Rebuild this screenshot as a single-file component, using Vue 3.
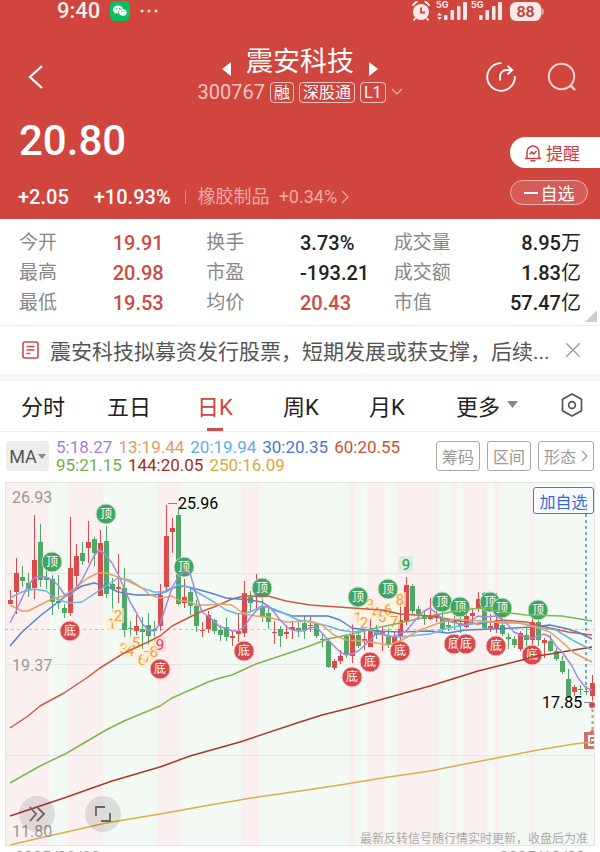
<script setup>
const stats = [
  { label: '今开', value: '19.91', up: true },
  { label: '换手', value: '3.73%' },
  { label: '成交量', value: '8.95', unit: '万' },
  { label: '最高', value: '20.98', up: true },
  { label: '市盈', value: '-193.21' },
  { label: '成交额', value: '1.83', unit: '亿' },
  { label: '最低', value: '19.53', up: true },
  { label: '均价', value: '20.43', up: true },
  { label: '市值', value: '57.47', unit: '亿' },
]

const tabs = ['分时', '五日', '日K', '周K', '月K']

const averages = [
  { name: '5', value: '18.27', key: 'ma5' },
  { name: '13', value: '19.44', key: 'ma13' },
  { name: '20', value: '19.94', key: 'ma20' },
  { name: '30', value: '20.35', key: 'ma30' },
  { name: '60', value: '20.55', key: 'ma60' },
  { name: '95', value: '21.15', key: 'ma95' },
  { name: '144', value: '20.05', key: 'ma144' },
  { name: '250', value: '16.09', key: 'ma250' },
]

// Rising phases: [start, end]
const bands = [
  [5, 49], [67, 103], [157, 181], [241, 259], [349, 355], [367, 385],
  [397, 439], [451, 457], [463, 487], [494, 499], [529, 535],
]

// [x, body top, body bottom, wick top, wick bottom, rising]
const candles = [
  [10, 600, 604, 590, 604, 1], [16, 573, 592, 558, 614, 1], [22, 577, 581, 566, 587, 0],
  [28, 583, 589, 573, 597, 0], [34, 560, 588, 515, 599, 1], [40, 542, 580, 524, 587, 0],
  [46, 577, 580, 566, 589, 0], [52, 579, 602, 575, 615, 0], [58, 601, 603, 575, 609, 0],
  [64, 608, 613, 604, 618, 0], [70, 568, 613, 517, 616, 1], [76, 556, 576, 544, 586, 1],
  [82, 553, 561, 542, 565, 0], [88, 542, 548, 521, 563, 1], [94, 539, 553, 537, 566, 0],
  [100, 543, 596, 530, 596, 1], [106, 541, 594, 526, 598, 0], [112, 584, 589, 578, 612, 0],
  [118, 587, 589, 554, 603, 1], [124, 588, 630, 568, 637, 0], [130, 628, 629, 621, 638, 0],
  [136, 626, 631, 615, 635, 1], [142, 629, 632, 617, 649, 0], [148, 625, 636, 613, 645, 0],
  [154, 629, 631, 621, 641, 0], [160, 595, 626, 584, 631, 1], [166, 536, 587, 505, 591, 1],
  [172, 528, 532, 518, 553, 1], [178, 515, 604, 507, 605, 0], [184, 597, 603, 579, 608, 1],
  [190, 592, 606, 588, 615, 0], [196, 606, 626, 600, 632, 0], [202, 630, 631, 622, 637, 1],
  [208, 615, 629, 611, 633, 1], [214, 620, 631, 619, 634, 0], [220, 630, 635, 625, 641, 0],
  [226, 627, 637, 618, 641, 0], [232, 636, 638, 631, 646, 1], [238, 631, 634, 613, 642, 1],
  [244, 593, 633, 581, 637, 1], [250, 597, 603, 591, 611, 0], [256, 596, 597, 574, 610, 1],
  [262, 607, 617, 599, 622, 0], [268, 613, 622, 605, 629, 0], [274, 632, 633, 621, 644, 1],
  [280, 629, 636, 626, 647, 0], [286, 632, 634, 625, 639, 1], [292, 627, 630, 621, 639, 1],
  [298, 628, 630, 620, 637, 0], [304, 623, 630, 616, 639, 0], [310, 625, 626, 616, 632, 1],
  [316, 624, 636, 622, 638, 0], [322, 639, 640, 634, 647, 0], [328, 641, 667, 638, 668, 0],
  [334, 661, 668, 659, 670, 1], [340, 656, 661, 650, 664, 1], [346, 636, 655, 635, 658, 0],
  [352, 635, 656, 624, 663, 1], [358, 635, 646, 628, 648, 0], [364, 639, 641, 628, 650, 1],
  [370, 628, 647, 618, 647, 1], [376, 630, 635, 625, 639, 0], [382, 632, 633, 626, 651, 1],
  [388, 636, 645, 625, 648, 0], [394, 637, 645, 631, 647, 1], [400, 620, 636, 601, 645, 1],
  [406, 585, 622, 577, 625, 1], [412, 586, 611, 584, 614, 0], [418, 609, 614, 606, 620, 0],
  [424, 615, 619, 611, 625, 0], [430, 615, 619, 598, 620, 1], [436, 614, 618, 610, 622, 1],
  [442, 618, 629, 610, 632, 0], [448, 625, 627, 620, 631, 0], [454, 621, 623, 616, 630, 0],
  [460, 623, 626, 616, 633, 0], [466, 616, 627, 610, 628, 1], [472, 613, 616, 608, 623, 1],
  [478, 599, 609, 592, 612, 1], [484, 593, 628, 592, 630, 0], [490, 626, 628, 614, 632, 1],
  [496, 621, 629, 593, 633, 1], [502, 625, 634, 621, 636, 0], [508, 637, 639, 633, 649, 0],
  [514, 639, 645, 636, 648, 0], [520, 633, 649, 631, 651, 1], [526, 635, 640, 628, 650, 0],
  [532, 622, 640, 618, 645, 1], [538, 622, 640, 620, 646, 0], [544, 640, 643, 638, 658, 1],
  [550, 641, 651, 635, 652, 0], [556, 651, 659, 648, 661, 0], [562, 661, 672, 656, 674, 0],
  [568, 679, 696, 669, 698, 0], [574, 687, 692, 685, 696, 1], [580, 689, 690, 685, 695, 0],
  [586, 691, 692, 686, 695, 0], [592, 683, 696, 675, 701, 1],
]

const lines = [
  { key: 'ma250', points: '10,845 40,838 106,823 160,814 210,805 258,797 300,791 340,785 382,778 430,771 460,765 502,757 538,750 574,744 592,742' },
  { key: 'ma144', points: '10,816 64,798 112,781 160,767 190,756 240,742 300,722 322,715 350,708 394,696 430,686 478,671 502,665 538,656 568,651 592,647' },
  { key: 'ma95', points: '10,783 40,766 67,753 106,730 124,721 160,706 172,698 208,682 220,678 232,675 256,664 280,656 304,648 328,639 352,634 376,628 400,623 430,616 460,610 484,608 502,612 526,615 562,616 592,621' },
  { key: 'ma60', points: '10,728 28,716 40,706 64,693 88,677 100,668 124,653 148,642 160,636 172,626 184,620 200,612 214,607 232,599 244,596 268,596 286,601 310,605 352,608 382,610 400,614 430,616 460,621 478,624 502,620 526,622 550,628 568,632 592,635' },
  { key: 'ma30', points: '10,646 22,632 40,616 58,602 70,593 82,586 94,583 106,586 118,592 136,595 154,595 160,594 172,588 184,586 200,590 214,594 226,598 250,600 262,602 274,610 292,616 328,616 340,620 352,628 376,631 400,632 430,631 448,633 466,630 490,629 514,628 532,627 550,625 568,629 580,633 592,639' },
  { key: 'ma20', points: '10,598 22,592 34,589 46,591 58,600 70,603 82,602 94,594 106,586 118,578 130,580 142,588 154,592 166,592 178,585 188,587 202,595 214,602 226,610 238,614 250,612 262,606 274,609 286,614 298,620 310,622 328,626 340,630 352,632 370,630 382,635 400,637 430,634 448,628 466,625 484,622 514,622 538,627 556,630 574,641 592,650' },
  { key: 'ma13', points: '10,605 22,611 28,611 40,605 52,599 64,596 76,587 88,578 98,573 106,573 118,577 130,582 142,588 150,595 160,598 172,596 178,600 190,602 196,605 208,605 220,604 232,605 244,614 256,616 268,617 286,622 310,621 322,625 334,635 346,640 364,641 388,645 400,641 418,631 436,624 454,619 466,620 484,621 502,623 520,623 538,628 550,632 562,642 574,653 592,662' },
  { key: 'ma5', points: '10,623 16,611 22,598 28,586 34,578 40,576 46,577 52,580 58,585 64,594 70,596 76,589 82,580 88,568 94,556 99,550 104,553 112,563 118,574 124,588 130,602 136,612 142,623 148,630 154,631 160,624 166,606 172,588 178,577 184,571 190,573 196,594 202,612 208,616 214,621 220,627 226,628 232,631 238,631 244,627 250,618 256,611 262,607 268,606 274,612 280,620 286,626 292,630 298,631 304,631 310,628 316,627 322,633 328,640 334,646 340,652 346,655 352,654 358,651 364,646 370,640 376,634 382,633 388,636 394,637 400,633 406,631 412,624 418,617 424,611 430,608 436,613 442,618 448,621 460,624 466,625 472,620 478,616 484,617 496,616 502,619 508,625 514,632 520,635 526,637 532,638 544,634 550,637 556,646 562,652 572,666 578,678 586,688 592,690' },
]

const tops = [[52, 562], [106, 514], [184, 567], [262, 588], [358, 597], [388, 589], [442, 602], [460, 607], [490, 602], [502, 608], [538, 610]]
const bottoms = [[70, 631], [160, 669], [244, 651], [352, 677], [370, 662], [400, 651], [454, 644], [466, 644], [496, 646], [532, 655]]

// Sequence counts: [x, y, count]
const counts = [
  [112, 624, 1], [118, 616, 2], [124, 649, 3], [130, 651, 4], [136, 643, 5], [142, 660, 6], [148, 657, 7], [154, 652, 8],
  [358, 618, 1], [364, 623, 2], [370, 605, 3], [376, 613, 4], [382, 617, 5], [388, 610, 6], [394, 622, 7], [400, 600, 8],
]
</script>

<template>
  <main class="screen">
    <section class="hero">
      <div class="status">
        <span class="clock">9:40</span>
        <svg class="wechat" viewBox="0 0 20 20" width="20" height="20" aria-hidden="true">
          <rect width="20" height="20" rx="5" fill="#07c160" />
          <path d="M8 4.500c-2.900 0-5 1.800-5 4 0 1.300.7 2.300 1.700 3l-.4 1.500 1.700-.9c.6.2 1.300.3 2 .3a5 5 0 0 1 5-4.700C12.600 5.800 10.600 4.500 8 4.500z" fill="#fff" />
          <path d="M12.800 7.900c-2.400 0-4.300 1.500-4.300 3.500s1.900 3.500 4.300 3.500c.5 0 1-.1 1.500-.2l1.400.8-.3-1.300c1-.6 1.600-1.600 1.600-2.800 0-2-1.900-3.500-4.200-3.500z" fill="#fff" stroke="#07c160" stroke-width=".5" />
          <g fill="#07c160"><circle cx="6.400" cy="7.500" r=".7" /><circle cx="9.600" cy="7.500" r=".7" /><circle cx="11.500" cy="10.600" r=".6" /><circle cx="14.200" cy="10.600" r=".6" /></g>
        </svg>
        <svg viewBox="0 0 18 4" width="18" height="4" aria-hidden="true"><g fill="#fbe4e2"><circle cx="2" cy="2" r="1.500" /><circle cx="9" cy="2" r="1.500" /><circle cx="16" cy="2" r="1.500" /></g></svg>
        <svg class="signals" viewBox="0 0 92 22" width="92" height="22" aria-hidden="true">
          <g fill="#fbe9e7">
            <circle cx="9" cy="12" r="8" />
            <path d="M.8 6a4 4 0 0 1 4.800-4.300zM17.200 6a4 4 0 0 0-4.800-4.300z" stroke="#fbe9e7" stroke-width="1" />
            <path d="M3.500 18l-2 2.500M14.500 18l2 2.500" stroke="#fbe9e7" stroke-width="2" />
            <path d="M27.500 12.500l2.500 3h-5zM27.500 20l2.500-3h-5z" />
            <rect x="32" y="15" width="3.500" height="5" rx="1" /><rect x="38.500" y="10" width="3.500" height="10" rx="1" /><rect x="45" y="6" width="3.500" height="14" rx="1" /><rect x="51" y="2" width="4" height="18" rx="1" />
            <rect x="67" y="15" width="3.500" height="5" rx="1" /><rect x="73.500" y="10" width="3.500" height="10" rx="1" /><rect x="80" y="6" width="3.500" height="14" rx="1" /><rect x="86" y="2" width="4" height="18" rx="1" />
            <text x="24" y="8" class="net">5G</text>
            <text x="59" y="8" class="net">5G</text>
          </g>
          <path d="M9 7.500v5h4" fill="none" stroke="#d0453e" stroke-width="1.800" />
        </svg>
        <span class="battery">88</span>
      </div>

      <header class="header">
        <button class="icon-btn back" aria-label="返回">
          <svg viewBox="0 0 16 26" width="16" height="26"><path d="M14 2L2 13l12 11" fill="none" stroke="#fff" stroke-width="2.200" /></svg>
        </button>
        <div class="title-box">
          <div class="title-row">
            <button class="icon-btn" aria-label="上一只"><svg viewBox="0 0 9 14" width="9" height="14"><path d="M9 0v14L0 7z" fill="#fff" /></svg></button>
            <h1>震安科技</h1>
            <button class="icon-btn" aria-label="下一只"><svg viewBox="0 0 9 14" width="9" height="14"><path d="M0 0v14l9-7z" fill="#fff" /></svg></button>
          </div>
          <div class="code-row">
            <span class="code">300767</span>
            <span class="tag">融</span>
            <span class="tag">深股通</span>
            <span class="tag">L1</span>
            <svg viewBox="0 0 12 8" width="12" height="8" aria-hidden="true"><path d="M1 1l5 5 5-5" fill="none" stroke="#f0b5b0" stroke-width="1.200" /></svg>
          </div>
        </div>
        <div class="actions">
          <button class="icon-btn" aria-label="分享">
            <svg viewBox="0 0 30 30" width="30" height="30" fill="none" stroke="#fff" stroke-width="1.800">
              <path d="M15.500 1.200A13.800 13.800 0 1 0 28.800 14" />
              <path d="M14 18.500v-3.500c0-4.500 2.500-7 7-7h5M21.500 4l4.800 4-4.800 4.300" />
            </svg>
          </button>
          <button class="icon-btn" aria-label="搜索">
            <svg viewBox="0 0 30 30" width="30" height="30" fill="none" stroke="#f8d4d1" stroke-width="2"><circle cx="14.500" cy="14.500" r="12.700" /><path d="M23.500 23.500l4.500 4.500" stroke-width="2.400" /></svg>
          </button>
        </div>
      </header>

      <div class="quote">
        <div>
          <div class="price">20.80</div>
          <div class="change">
            <span class="delta">+2.05</span>
            <span class="percent">+10.93%</span>
            <a class="sector" href="#">
              <span>橡胶制品</span><span class="sector-value">+0.34%</span>
              <svg viewBox="0 0 8 14" width="8" height="14" aria-hidden="true"><path d="M1 1l6 6-6 6" fill="none" stroke="#f0aaa6" stroke-width="1.200" /></svg>
            </a>
          </div>
        </div>
        <div class="quote-actions">
          <button class="remind">
            <svg viewBox="0 0 18 18" width="18" height="18" fill="none" stroke="#c9443e" stroke-width="1.500">
              <path d="M1 14.500h16M3 14.500V8a6 6 0 0 1 12 0v6.500M6.500 16.700h5" /><path d="M5.500 10.500l2.500-2.500 1.500 2 3-3" />
            </svg>
            提醒
          </button>
          <button class="unwatch"><svg viewBox="0 0 14 2" width="14" height="2" aria-hidden="true"><path d="M0 1h14" stroke="#fff" stroke-width="2" /></svg>自选</button>
        </div>
      </div>
    </section>

    <dl class="stats">
      <template v-for="s in stats" :key="s.label">
        <dt>{{ s.label }}</dt>
        <dd :class="{ up: s.up }">{{ s.value }}<span v-if="s.unit" class="unit">{{ s.unit }}</span></dd>
      </template>
    </dl>

    <div class="news">
      <svg viewBox="0 0 17 18" width="17" height="18" fill="none" stroke="#cf4b4b" stroke-width="1.600" aria-hidden="true"><rect x="1" y="1" width="15" height="16" rx="2" /><path d="M4.500 5.500h8M4.500 9h8M4.500 12.500h4" /></svg>
      <a href="#">震安科技拟募资发行股票，短期发展或获支撑，后续...</a>
      <button class="icon-btn" aria-label="关闭"><svg viewBox="0 0 14 14" width="14" height="14"><path d="M0 0l14 14M14 0L0 14" stroke="#999" stroke-width="1.300" /></svg></button>
    </div>

    <nav class="tabs">
      <button v-for="t in tabs" :key="t" :class="{ active: t === '日K' }">{{ t }}</button>
      <button class="more">更多<svg viewBox="0 0 11 7" width="11" height="7" aria-hidden="true"><path d="M0 0h11L5.500 7z" fill="#888" /></svg></button>
      <button aria-label="设置">
        <svg viewBox="0 0 24 26" width="24" height="26" fill="none" stroke="#555" stroke-width="1.700"><path d="M12 2l9.500 5.300v11.400L12 24l-9.500-5.300V7.300z" stroke-linejoin="round" /><circle cx="12" cy="13" r="3.400" /></svg>
      </button>
    </nav>

    <div class="averages">
      <button class="ma">MA<svg viewBox="0 0 8 5" width="8" height="5" aria-hidden="true"><path d="M0 0h8L4 5z" fill="#888" /></svg></button>
      <div class="values"><span v-for="a in averages" :key="a.key" :class="a.key">{{ a.name }}:{{ a.value }}</span></div>
      <div class="tools">
        <button>筹码</button>
        <button>区间</button>
        <button>形态<svg viewBox="0 0 7 12" width="7" height="12" aria-hidden="true"><path d="M1 1l5 5-5 5" fill="none" stroke="#999" stroke-width="1.200" /></svg></button>
      </div>
    </div>

    <section class="chart">
      <svg class="plot" viewBox="0 480 600 366" role="img" aria-label="日K线图">
        <rect x="5" y="482" width="589" height="364" fill="#f2faf3" />
        <rect v-for="b in bands" :key="b[0]" :x="b[0]" y="482" :width="b[1] - b[0]" height="364" fill="#faf0ef" />
        <path d="M5 573.500H594M5 664.500H594M5 755.500H594" stroke="#e4e8e4" />
        <rect x="5.500" y="482.500" width="589" height="363" fill="none" stroke="#e2e5e2" />
        <path d="M5 629.500H594" stroke="#d9bf8c" stroke-dasharray="3 3" />
        <path d="M586 514V690" stroke="#7ba3da" stroke-width="2" stroke-dasharray="3 3" />
        <path d="M592.500 709V732" stroke="#d98a88" stroke-width="2" stroke-dasharray="3 3" />

        <g v-for="c in candles" :key="c[0]" :class="c[5] ? 'rise' : 'fall'">
          <path :d="`M${c[0] + 0.5} ${c[3]}V${c[4]}`" />
          <rect :x="c[0] - 2" :y="c[1]" width="5" :height="c[2] - c[1]" />
        </g>

        <g v-for="n in counts" :key="`n${n[0]}`" class="count">
          <rect :x="n[0] - 6" :y="n[1] - 8" width="12" height="15" rx="1" />
          <text :x="n[0]" :y="n[1] + 5">{{ n[2] }}</text>
        </g>
        <g class="count sell"><rect x="153" y="636" width="13" height="16" rx="1" /><text x="160" y="650">9</text></g>
        <g class="count buy"><path d="M399 556h14v16h-4l-3 3-3-3h-4z" /><text x="406" y="570">9</text></g>

        <g v-for="p in tops" :key="`t${p[0]}`" class="badge top"><circle :cx="p[0]" :cy="p[1]" r="10" /><text :x="p[0]" :y="p[1] + 4">顶</text></g>
        <g v-for="p in bottoms" :key="`b${p[0]}`" class="badge low"><circle :cx="p[0]" :cy="p[1]" r="10" /><text :x="p[0]" :y="p[1] + 4">底</text></g>

        <g fill="#d06f6e"><path d="M584 732h10v17h-10z" /><circle cx="592" cy="732" r="2" /></g>
        <path d="M594 736h-5v9h5M594 740h-3" fill="none" stroke="#fff" stroke-width="2" />
        <polyline v-for="l in lines" :key="l.key" class="line" :class="l.key" :points="l.points" />
        <circle cx="592" cy="705" r="3" fill="#d6484a" />

        <path d="M168 503.500h9M584 702.500h7" stroke="#888" />
        <g class="axis"><text x="12" y="503">26.93</text><text x="12" y="671">19.37</text><text x="12" y="837">11.80</text></g>
        <g class="extreme"><text x="178" y="509">25.96</text><text x="542" y="708">17.85</text></g>
        <text x="588" y="843" class="note">最新反转信号随行情实时更新，收盘后为准</text>
      </svg>
      <button class="add">加自选</button>
      <div class="floating">
        <button aria-label="展开"><svg viewBox="0 0 18 18" width="18" height="18" fill="none" stroke="#666" stroke-width="1.800"><path d="M2 2l6 7-6 7M9 2l7 7-7 7" /></svg></button>
        <button aria-label="全屏"><svg viewBox="0 0 18 18" width="18" height="18" fill="none" stroke="#666" stroke-width="1.800"><path d="M2 11V2h9M16 8v8H7" /></svg></button>
      </div>
    </section>
    <div class="dates"><span>2025/02/20</span><span>2025/12/03</span></div>
  </main>
</template>

<style>
body { background: #fff; }
</style>

<style scoped>
.screen {
  height: 100vh;
  overflow: hidden;
  font-family: Roboto, "Noto Sans CJK SC", sans-serif;
  color: #222;
}
button {
  padding: 0;
  border: 0;
  background: none;
  font: inherit;
  color: inherit;
}
a { color: inherit; text-decoration: none; }
svg { display: block; flex: none; }
.icon-btn { display: flex; }

.hero { background: #d0453e; color: #fff; }
.status {
  display: flex;
  align-items: center;
  height: 22px;
  padding: 0 59px 0 57px;
}
.clock { font-size: 22px; font-weight: 500; line-height: 22px; color: #fdeceb; }
.wechat { margin: 0 10px; }
.signals { margin-left: auto; }
.net { font: 700 9px Inter, sans-serif; }
.battery {
  position: relative;
  width: 31px;
  margin-left: 6px;
  border-radius: 6px;
  background: #fbe9e7;
  color: #c0433d;
  font: 700 14px/19px Inter, sans-serif;
  text-align: center;
}
.battery::after {
  content: "";
  position: absolute;
  top: 6px;
  right: -3px;
  width: 3px;
  height: 7px;
  border-radius: 0 3px 3px 0;
  background: #e39a96;
}

.header {
  display: grid;
  grid-template-columns: 1fr auto 1fr;
  align-items: center;
  padding: 22px 23px 0;
}
.back { padding-left: 5px; }
.title-box { padding-bottom: 6px; }
.title-row, .code-row { display: flex; align-items: center; justify-content: center; }
.title-row { gap: 15px; }
.title-row .icon-btn { padding-top: 14px; }
h1 { margin: 0; font-size: 27px; font-weight: 400; line-height: 36px; }
.code-row { gap: 5px; height: 24px; }
.code { font-size: 20px; color: #f5c4c1; }
.tag {
  padding: 0 3px;
  border: 1px solid #f5c4c1;
  border-radius: 4px;
  font-size: 16px;
  line-height: 19px;
}
.actions { display: flex; justify-content: flex-end; gap: 31px; }

.quote { display: flex; justify-content: space-between; }
.price { padding: 4px 0 0 19px; font-size: 42px; font-weight: 500; line-height: 54px; }
.change {
  display: flex;
  align-items: center;
  margin-top: 14px;
  padding: 0 0 7px 18px;
  font-size: 20px;
  font-weight: 500;
  line-height: 30px;
}
.percent { margin: 0 14px 0 25px; }
.sector { display: flex; align-items: center; font-size: 18px; font-weight: 400; color: #f0aaa6; }
.sector::before { content: ""; width: 1px; height: 14px; margin-right: 12px; background: #e08580; }
.sector-value { margin: 0 4px 0 9px; }
.quote-actions { display: flex; flex-direction: column; gap: 12px; padding-top: 27px; }
.remind {
  display: flex;
  align-items: center;
  gap: 4px;
  width: 90px;
  height: 31px;
  padding-left: 14px;
  border-radius: 16px 0 0 16px;
  background: #fff;
  color: #c9443e;
  font-size: 17px;
}
.unwatch {
  display: flex;
  align-items: center;
  justify-content: center;
  gap: 3px;
  width: 78px;
  height: 25px;
  border: 1px solid #efb0ac;
  border-radius: 13px;
  background: #d65d57;
  font-size: 17px;
}

.stats {
  position: relative;
  display: grid;
  grid-template-columns: repeat(6, 1fr);
  margin: 0;
  padding: 9px 19px 7px;
  border-bottom: 1px solid #ececec;
  font-size: 20px;
  line-height: 30px;
}
.stats dt { font-size: 19px; color: #888; }
.stats dd { margin: 0; font-weight: 500; white-space: nowrap; }
.stats dd:nth-of-type(3n) { text-align: right; }
.unit { font-weight: 400; }
.stats::after {
  content: "";
  position: absolute;
  right: 3px;
  bottom: 3px;
  border: 6px solid;
  border-color: transparent #ccc #ccc transparent;
}
.stats .up { color: #cc4b43; }

.news {
  display: flex;
  align-items: center;
  gap: 11px;
  height: 48px;
  padding: 0 20px 0 22px;
  border-bottom: 7px solid #f6f6f6;
  font-size: 21px;
  color: #555;
}
.news a { flex: 1; overflow: hidden; white-space: nowrap; }

.tabs {
  display: grid;
  grid-template-columns: repeat(5, 86fr) 114fr 56fr;
  height: 50px;
  border-bottom: 1px solid #ececec;
  font-size: 22px;
}
.tabs button {
  position: relative;
  display: flex;
  align-items: center;
  justify-content: center;
  padding-bottom: 3px;
}
.tabs .active { color: #d0453e; }
.tabs .active::after {
  content: "";
  position: absolute;
  bottom: 0;
  width: 16px;
  height: 3px;
  background: #cf4b4b;
}
.tabs .more { gap: 7px; }

.averages { display: flex; align-items: center; height: 48px; padding: 0 6px; }
.ma {
  display: flex;
  align-items: center;
  justify-content: center;
  gap: 1px;
  width: 43px;
  height: 30px;
  border-radius: 3px;
  background: #ededed;
  color: #555;
  font-size: 18px;
}
.values {
  display: flex;
  flex: 1;
  flex-wrap: wrap;
  gap: 0 6px;
  padding-left: 7px;
  font-size: 17px;
  line-height: 18px;
}
.tools { display: flex; gap: 7px; }
.tools button {
  display: flex;
  align-items: center;
  gap: 5px;
  height: 30px;
  padding: 0 5px;
  border: 1px solid #aaa;
  border-radius: 3px;
  color: #999;
  font-size: 16px;
}

.ma5 { color: #a080dc; stroke: #a688dc; }
.ma13 { color: #e6985e; stroke: #e8a06a; }
.ma20 { color: #60aee4; stroke: #6db5e6; }
.ma30 { color: #4a76cc; stroke: #5680d0; }
.ma60 { color: #cb5038; stroke: #cd5a42; }
.ma95 { color: #74b044; stroke: #7eb650; }
.ma144 { color: #a03020; stroke: #a83a28; }
.ma250 { color: #dba83c; stroke: #dcae4a; }
.values span { stroke: none; }

.chart { position: relative; }
.plot { width: 100%; }
.line { fill: none; stroke-width: 1.500; stroke-linejoin: round; }
.rise { fill: #db4b4b; stroke: #db4b4b; }
.fall { fill: #4fa866; stroke: #4fa866; }
.rise rect, .fall rect { stroke-width: 0; }
.rise path, .fall path { stroke-width: 1; }
.badge text { fill: #fff; font-size: 12px; text-anchor: middle; }
.top circle { fill: #45a362; stroke: #bfe2c8; }
.low circle { fill: #d94848; stroke: #f4c4c4; }
.count rect { fill: #fdeed6; fill-opacity: 0.7; }
.count text { fill: #eda336; font-size: 15px; text-anchor: middle; }
.sell rect { fill: #f9d3d6; }
.sell text { fill: #dc4a55; }
.buy path { fill: #d6efdf; }
.buy text { fill: #45a362; font-weight: 500; }
.axis { fill: #999; font-size: 16px; }
.extreme { fill: #000; font-size: 16px; }
.note { fill: #aaa; font-size: 12px; text-anchor: end; }
.add {
  position: absolute;
  top: 7px;
  right: 6px;
  width: 61px;
  height: 27px;
  border: 1px solid #4a76d4;
  border-radius: 3px;
  background: #f7fbff;
  color: #3a68d0;
  font-size: 16px;
}
.floating { position: absolute; left: 19px; bottom: 14px; display: flex; gap: 30px; }
.floating button {
  display: grid;
  place-items: center;
  width: 36px;
  height: 36px;
  border-radius: 50%;
  background: rgba(0, 0, 0, 0.1);
}
.dates {
  display: flex;
  justify-content: space-between;
  padding: 1px 15px 0;
  font-size: 16px;
  line-height: 22px;
  color: #999;
}
</style>
